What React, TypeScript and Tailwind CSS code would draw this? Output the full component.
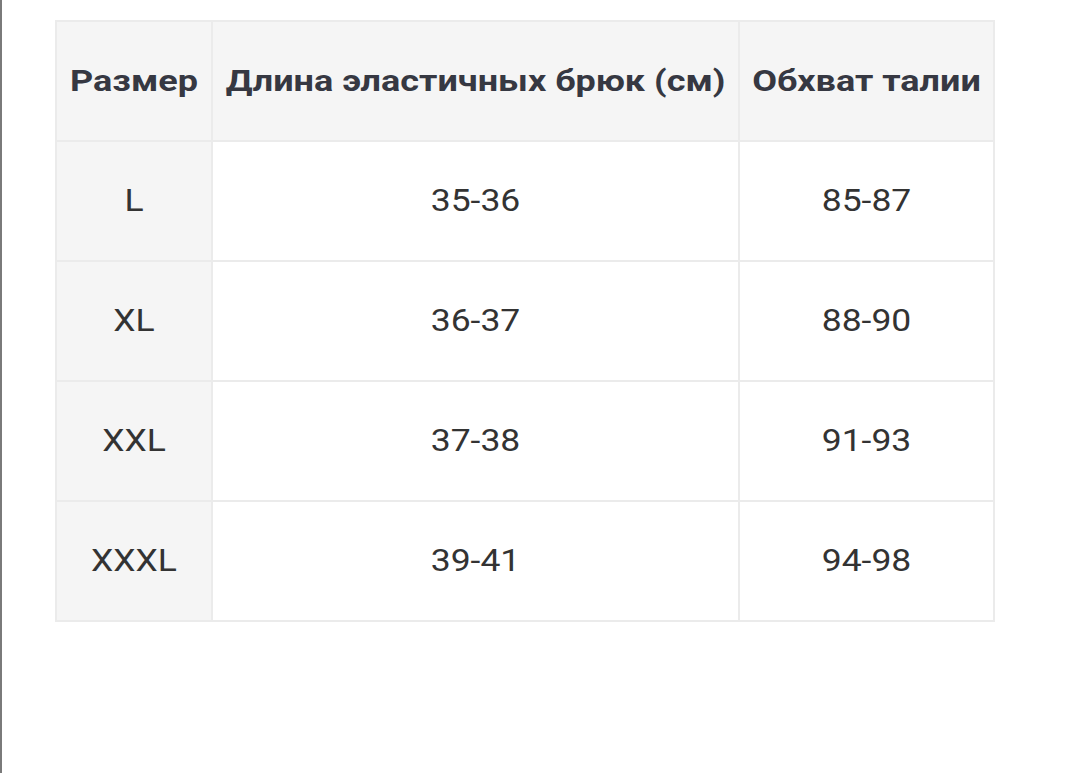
import React from "react";

const rows = [
  ["L", "35-36", "85-87"],
  ["XL", "36-37", "88-90"],
  ["XXL", "37-38", "91-93"],
  ["XXXL", "39-41", "94-98"],
];

export default function App() {
  return (
    <div
      className="w-[1080px] h-[773px] bg-white border-l-2 border-[#7a7a7a] pl-[53px] pt-[20px]"
      style={{ fontFamily: "Roboto, 'Noto Sans', sans-serif" }}
    >
      <div className="grid grid-cols-[156px_527px_255px] w-[940px] border-l-2 border-t-2 border-[#ebebeb]">
        {["Размер", "Длина эластичных брюк (см)", "Обхват талии"].map((h) => (
          <div
            key={h}
            className="h-[120px] border-r-2 border-b-2 border-[#ebebeb] bg-[#f5f5f5] flex items-center justify-center text-[36px] font-bold text-[#363842] whitespace-nowrap"
          >
            <span className="inline-block scale-y-[0.82]">{h}</span>
          </div>
        ))}
        {rows.map((r) =>
          r.map((c, i) => (
            <div
              key={r[0] + i}
              className={`h-[120px] border-r-2 border-b-2 border-[#ebebeb] flex items-center justify-center text-[35.5px] text-[#333333] ${
                i === 0 ? "bg-[#f5f5f5]" : "bg-white"
              }`}
            >
              <span className="inline-block scale-y-[0.88]">{c}</span>
            </div>
          ))
        )}
      </div>
    </div>
  );
}
